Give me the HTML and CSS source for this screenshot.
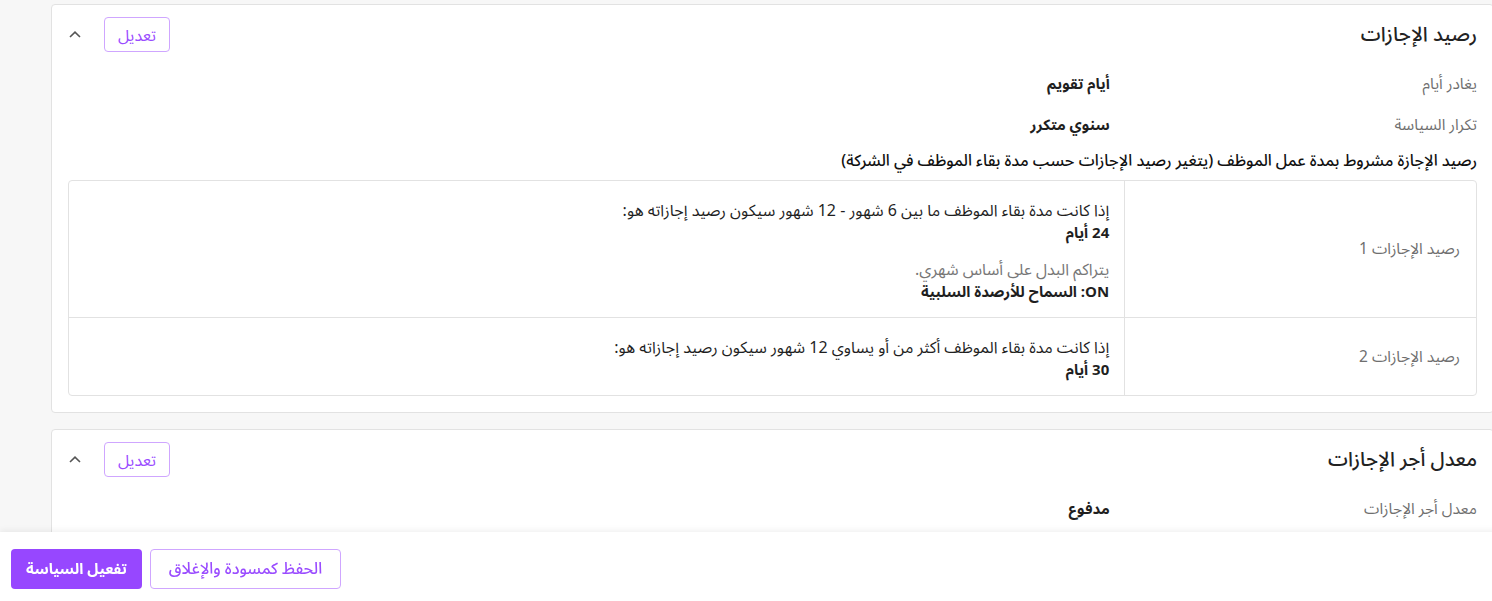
FILE: index.html
```html
<!DOCTYPE html>
<html lang="ar">
  <head>
    <meta charset="utf-8">
    <title>سياسة الإجازات</title>
    <link rel="stylesheet" href="styles.css">
  </head>
  <body>

    <main class="page" dir="rtl">

      <!-- leave balance -->
      <section class="card">
        <header class="card-head">
          <h2 class="card-title">رصيد الإجازات</h2>
          <div class="card-actions">
            <button class="btn-edit">تعديل</button>
            <button class="toggle" aria-label="طي">
              <svg width="12" height="7" viewBox="0 0 12 7"><polyline points="1,6 6,1.2 11,6" fill="none" stroke="#555" stroke-width="1.6"/></svg>
            </button>
          </div>
        </header>

        <div class="info-row">
          <span class="info-label">يغادر أيام</span>
          <span class="info-value">أيام تقويم</span>
        </div>
        <div class="info-row">
          <span class="info-label">تكرار السياسة</span>
          <span class="info-value">سنوي متكرر</span>
        </div>

        <p class="note">رصيد الإجازة مشروط بمدة عمل الموظف (يتغير رصيد الإجازات حسب مدة بقاء الموظف في الشركة)</p>

        <table class="tiers">
          <tr>
            <td class="tier-name">رصيد الإجازات 1</td>
            <td class="tier-body">
              <p>إذا كانت مدة بقاء الموظف ما بين 6 شهور - 12 شهور سيكون رصيد إجازاته هو:<br><b>24 أيام</b></p>
              <p><span class="muted">يتراكم البدل على أساس شهري.</span><br><b>ON: السماح للأرصدة السلبية</b></p>
            </td>
          </tr>
          <tr>
            <td class="tier-name">رصيد الإجازات 2</td>
            <td class="tier-body">
              <p>إذا كانت مدة بقاء الموظف أكثر من أو يساوي 12 شهور سيكون رصيد إجازاته هو:<br><b>30 أيام</b></p>
            </td>
          </tr>
        </table>
      </section>

      <!-- pay rate -->
      <section class="card">
        <header class="card-head">
          <h2 class="card-title">معدل أجر الإجازات</h2>
          <div class="card-actions">
            <button class="btn-edit">تعديل</button>
            <button class="toggle" aria-label="طي">
              <svg width="12" height="7" viewBox="0 0 12 7"><polyline points="1,6 6,1.2 11,6" fill="none" stroke="#555" stroke-width="1.6"/></svg>
            </button>
          </div>
        </header>

        <div class="info-row">
          <span class="info-label">معدل أجر الإجازات</span>
          <span class="info-value">مدفوع</span>
        </div>
        <div class="info-row">
          <span class="info-label">الحد الأقصى</span>
          <span class="info-value">غير محدود</span>
        </div>
      </section>

    </main>

    <footer class="footer" dir="rtl">
      <a href="#" class="back-link">إلغاء</a>
      <div class="footer-actions">
        <button class="btn btn-outline">الحفظ كمسودة والإغلاق</button>
        <button class="btn btn-primary">تفعيل السياسة</button>
      </div>
    </footer>

  </body>
</html>
```

FILE: styles.css
```css
html {
  overflow: hidden;
}

body {
  margin: 0;
  background: #f7f7f7;
  font-family: "Noto Sans Arabic", "Noto Sans", "DejaVu Sans", sans-serif;
  color: #1f1f1f;
}

.page {
  width: 1443px;
  margin-left: 51px;
  padding-top: 4px;
  display: flex;
  flex-direction: column;
  gap: 16px;
}

.card {
  background: #fff;
  border: 1px solid #e2e2e2;
  border-radius: 4px;
  padding: 0 16px 16px;
}

.card-head {
  display: flex;
  justify-content: space-between;
  align-items: center;
  padding-top: 12px;
  height: 35px;
  margin-bottom: 11px;
}

.card-title {
  margin: 0;
  font-size: 20px;
  font-weight: 500;
  color: #222;
}

.card-actions {
  display: flex;
  align-items: center;
  gap: 22px;
}

.btn-edit {
  width: 66px;
  height: 35px;
  background: #fff;
  border: 1px solid #cfa6ff;
  border-radius: 4px;
  color: #9a4cff;
  font-family: inherit;
  font-size: 16px;
  cursor: pointer;
}

.toggle {
  width: 14px;
  padding: 0;
  border: 0;
  background: none;
  display: flex;
  justify-content: center;
  cursor: pointer;
}

.info-row {
  display: grid;
  grid-template-columns: 25% 1fr;
  align-items: center;
  height: 41px;
  font-size: 15.5px;
}

.info-label {
  color: #6f6f6f;
}

.info-value {
  padding-right: 15px;
  font-size: 15px;
  font-weight: 700;
}

.note {
  margin: 5px 0 8px;
  font-size: 16px;
  font-weight: 500;
  line-height: 22px;
  color: #111;
}

.tiers {
  width: 100%;
  border-collapse: separate;
  border-spacing: 0;
  border: 1px solid #e2e2e2;
  border-radius: 4px;
  font-size: 16px;
}

.tiers td {
  border-top: 1px solid #e2e2e2;
}

.tiers tr:first-child td {
  border-top: 0;
}

.tier-name {
  width: 25%;
  padding: 0 16px;
  color: #6f6f6f;
  font-size: 15.5px;
  border-left: 1px solid #e2e2e2;
}

.tier-body {
  padding: 19px 15px 14px;
}

.tier-body p {
  margin: 0;
  line-height: 22px;
}

.tier-body p + p {
  margin-top: 15px;
}

.tier-body b {
  font-size: 15px;
}

.muted {
  color: #777;
}

.footer {
  position: fixed;
  left: 0;
  bottom: 0;
  width: 1532px;
  box-sizing: border-box;
  height: 69px;
  padding: 17px 11px 12px 11px;
  background: #fff;
  box-shadow: 0 -2px 6px rgba(0, 0, 0, 0.06);
  display: flex;
  justify-content: space-between;
  align-items: center;
}

.back-link {
  color: #9a4cff;
  text-decoration: none;
  font-size: 14px;
  font-weight: 600;
  padding-top: 4px;
}

.footer-actions {
  display: flex;
  gap: 8px;
  align-self: flex-start;
}

.btn {
  height: 40px;
  border-radius: 4px;
  font-family: inherit;
  font-size: 15px;
  cursor: pointer;
}

.btn-outline {
  width: 191px;
  background: #fff;
  border: 1px solid #cfa6ff;
  color: #9a4cff;
  font-size: 16px;
  font-weight: 500;
}

.btn-primary {
  width: 131px;
  background: #9747ff;
  border: 0;
  color: #fff;
  font-weight: 700;
}
```
